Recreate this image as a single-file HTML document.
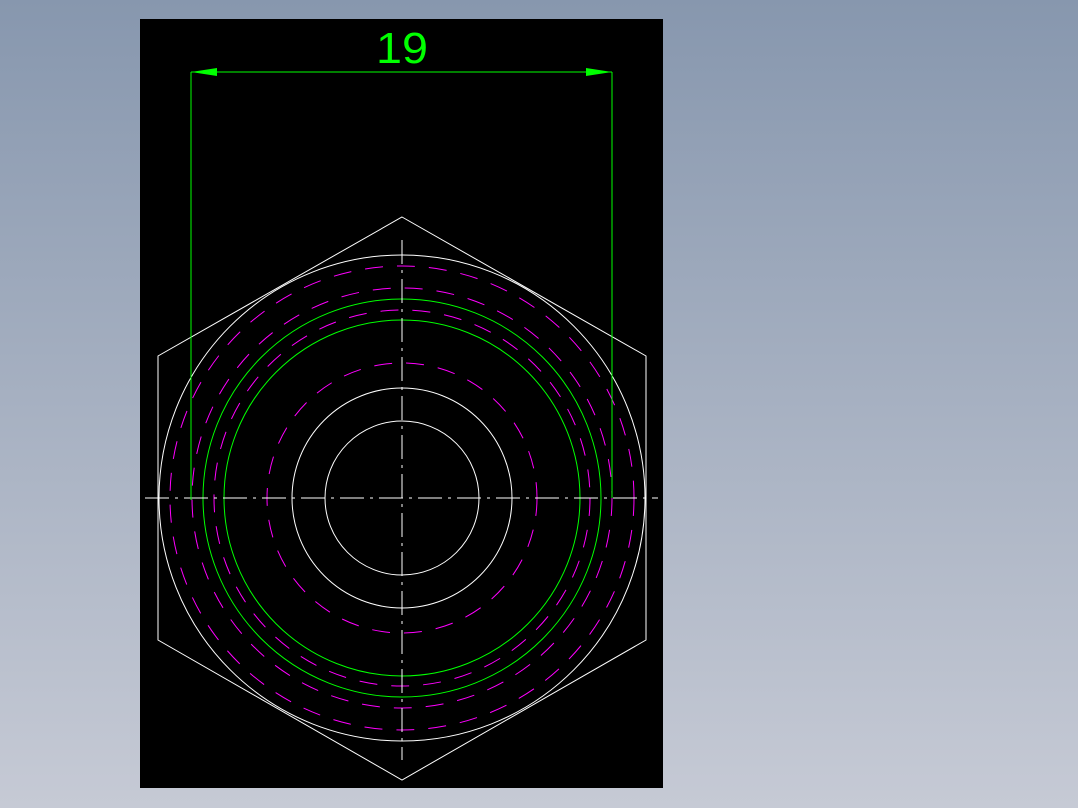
<!DOCTYPE html>
<html><head><meta charset="utf-8"><style>
html,body{margin:0;padding:0;}
body{width:1078px;height:808px;overflow:hidden;background:linear-gradient(#8797ae,#c6cad5);}
svg{position:absolute;left:0;top:0;}
</style></head><body>
<svg width="1078" height="808" viewBox="0 0 1078 808">
<rect x="140" y="19" width="523" height="769" fill="#000"/>
<g fill="none" stroke-width="1">
<polygon points="402,217 646,356 646,640 402,780 158,640 158,356" stroke="#fff"/>
<circle cx="402" cy="498" r="243" stroke="#fff"/>
<circle cx="402" cy="498" r="110" stroke="#fff"/>
<circle cx="402" cy="498" r="77" stroke="#fff"/>
<circle cx="402" cy="498" r="199" stroke="#00ff00"/>
<circle cx="402" cy="498" r="178" stroke="#00ff00"/>
<g stroke="#ff00ff" stroke-dasharray="18,14">
<circle cx="402" cy="498" r="232"/>
<circle cx="402" cy="498" r="210"/>
<circle cx="402" cy="498" r="188"/>
<circle cx="402" cy="498" r="135"/>
</g>
<line x1="145" y1="498" x2="658" y2="498" stroke="#fff" stroke-dasharray="24,6,3,6"/>
<line x1="402" y1="240" x2="402" y2="760" stroke="#fff" stroke-dasharray="24,6,3,6"/>
<line x1="191" y1="72" x2="191" y2="500" stroke="#00ff00"/>
<line x1="612" y1="72" x2="612" y2="498" stroke="#00ff00"/>
<line x1="191" y1="72" x2="612" y2="72" stroke="#00ff00"/>
</g>
<polygon points="191,72 217,68 217,76" fill="#00ff00"/>
<polygon points="612,72 586,68 586,76" fill="#00ff00"/>
<text x="402" y="63" fill="#00ff00" font-family="Liberation Sans, sans-serif" font-size="44" text-anchor="middle" textLength="52" lengthAdjust="spacingAndGlyphs">19</text>
</svg>
</body></html>
